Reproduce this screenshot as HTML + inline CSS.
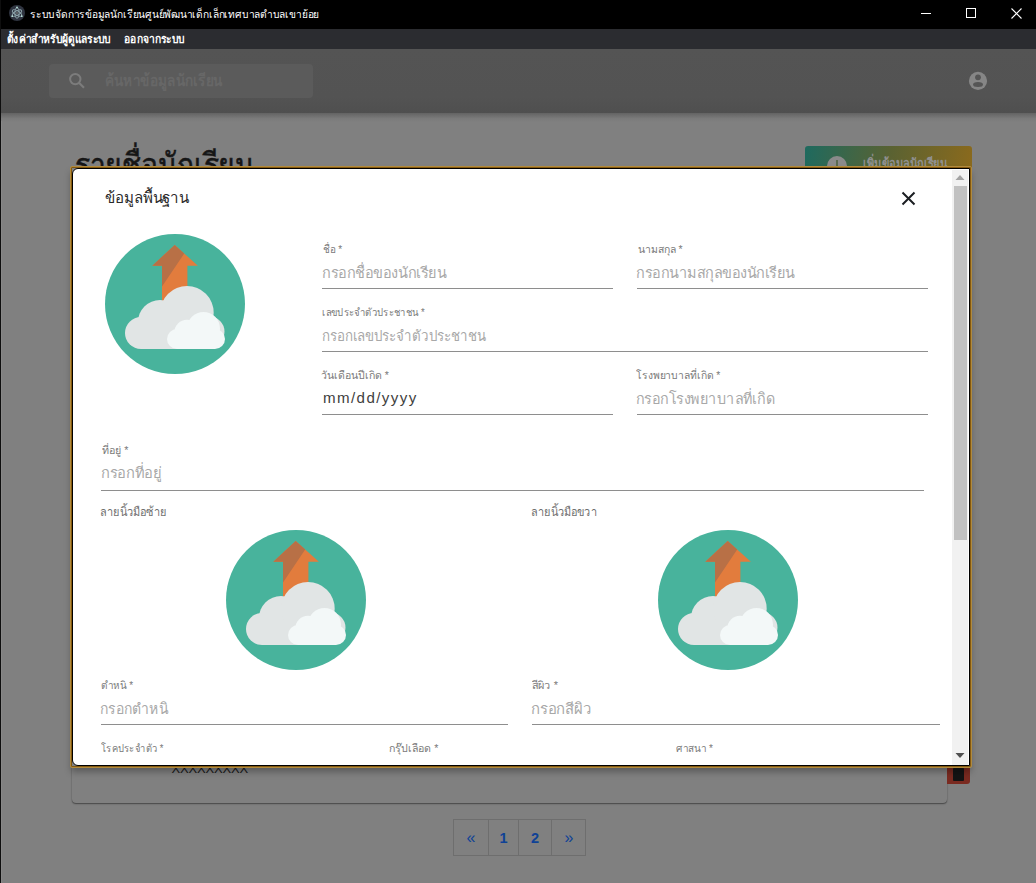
<!DOCTYPE html>
<html><head><meta charset="utf-8"><style>
html,body{margin:0;padding:0;}
body{width:1036px;height:883px;overflow:hidden;position:relative;background:#808080;font-family:"Liberation Sans",sans-serif;}
.a{position:absolute;}
.t{position:absolute;white-space:nowrap;transform-origin:0 0;}
#ptitle{-webkit-text-stroke:0.6px #161616;}
</style></head><body>
<!-- page behind overlay -->
<div class="a" style="left:0;top:0;width:1px;height:883px;background:#0e0e0e;z-index:50"></div><div class="a" style="left:1px;top:121px;width:1px;height:762px;background:#888;z-index:50"></div>
<div class="a" style="left:0;top:0;width:1036px;height:29px;background:#000"></div>
<div class="a" style="left:9px;top:5px;width:16px;height:16px;border-radius:50%;background:#2f3440"></div>
<svg class="a" style="left:9px;top:5px" width="16" height="16" viewBox="0 0 16 16"><g fill="none" stroke="#8fa6ad" stroke-width="0.9"><ellipse cx="8" cy="8" rx="5.2" ry="2.1" transform="rotate(30 8 8)"/><ellipse cx="8" cy="8" rx="5.2" ry="2.1" transform="rotate(90 8 8)"/><ellipse cx="8" cy="8" rx="5.2" ry="2.1" transform="rotate(150 8 8)"/></g><circle cx="8" cy="8" r="0.9" fill="#777"/><circle cx="8" cy="2.4" r="0.9" fill="#b8e0d8"/><circle cx="3.2" cy="11.2" r="0.9" fill="#b8e0d8"/><circle cx="12.8" cy="11.2" r="0.9" fill="#b8e0d8"/></svg>
<div class="a" style="left:0;top:29px;width:1036px;height:20px;background:#2b2c30"></div>
<div class="a" style="left:0;top:49px;width:1036px;height:64px;background:linear-gradient(#545454 0%,#535353 75%,#4f4f4f 100%)"></div>
<div class="a" style="left:0;top:113px;width:1036px;height:9px;background:linear-gradient(#636363,#7a7a7a 60%,#808080)"></div>
<div class="a" style="left:49px;top:64px;width:264px;height:34px;border-radius:4px;background:#5b5b5b"></div>
<svg class="a" style="left:65.5px;top:69.5px" width="20" height="20" viewBox="0 0 20 20"><circle cx="9.3" cy="9.1" r="5.2" fill="none" stroke="#7c7c7c" stroke-width="2"/><line x1="13" y1="12.8" x2="18" y2="17.8" stroke="#7c7c7c" stroke-width="2.2"/></svg>
<svg class="a" style="left:966px;top:69px" width="24" height="24" viewBox="0 0 24 24"><circle cx="12" cy="11.9" r="9.1" fill="#868686"/><circle cx="12" cy="8.3" r="2.9" fill="#555"/><ellipse cx="12" cy="15.6" rx="5" ry="2.5" fill="#555"/></svg>
<!-- window controls -->
<div class="a" style="left:921px;top:13px;width:10px;height:1px;background:#fff"></div>
<div class="a" style="left:966px;top:8px;width:8px;height:8px;border:1px solid #fff"></div>
<svg class="a" style="left:1011px;top:8px" width="11" height="11" viewBox="0 0 11 11"><path d="M0.5 0.5L10.5 10.5M10.5 0.5L0.5 10.5" stroke="#fff" stroke-width="1.1"/></svg>
<!-- button behind -->
<div class="a" style="left:805px;top:146px;width:167px;height:36px;border-radius:3px;background:linear-gradient(100deg,#1e6a5f 0%,#5a6232 50%,#8c6a1c 100%)"></div>
<div class="a" style="left:827px;top:156px;width:20px;height:20px;border-radius:50%;background:#8a8a8a"></div>
<div class="a" style="left:836px;top:160px;width:2px;height:12px;background:#5a6a50"></div>
<!-- card behind -->
<div class="a" style="left:72px;top:600px;width:875px;height:203px;border-radius:4px;background:#808080;box-shadow:0 1px 1.5px rgba(0,0,0,0.45), 0 0 1px rgba(0,0,0,0.25)"></div>
<div class="t" style="left:171.5px;top:761.7px;font-size:13px;line-height:13px;color:#1a1a1a;letter-spacing:-0.17px">XXXXXXXXX</div>
<div class="a" style="left:947px;top:766px;width:23px;height:18px;background:#7a2a20;border-radius:0 0 3px 0"></div>
<div class="a" style="left:953px;top:768px;width:11px;height:13px;background:#141414;border-radius:1px"></div>
<!-- pagination -->
<div class="a" style="left:453px;top:819px;width:133px;height:37px;border:1px solid #6e6e6e;box-sizing:border-box"></div>
<div class="a" style="left:488px;top:819px;width:1px;height:37px;background:#6e6e6e"></div>
<div class="a" style="left:518px;top:819px;width:1px;height:37px;background:#6e6e6e"></div>
<div class="a" style="left:551px;top:819px;width:1px;height:37px;background:#6e6e6e"></div>
<div class="t" style="left:461px;top:831.2px;font-size:14.5px;line-height:14.5px;color:#0f4296;width:20px;text-align:center;font-weight:normal;font-size:16px">&laquo;</div>
<div class="t" style="left:493.5px;top:831.2px;font-size:14.5px;line-height:14.5px;color:#0f4296;width:20px;text-align:center;font-weight:bold">1</div>
<div class="t" style="left:525px;top:831.2px;font-size:14.5px;line-height:14.5px;color:#0f4296;width:20px;text-align:center;font-weight:bold">2</div>
<div class="t" style="left:559px;top:831.2px;font-size:14.5px;line-height:14.5px;color:#0f4296;width:20px;text-align:center;font-weight:normal;font-size:16px">&raquo;</div>
<div id="title" class="t" style="left:29.7px;top:9.05px;font-size:10.53px;line-height:10.53px;color:#ffffff;font-weight:400;transform:scaleX(0.967)">ระบบจัดการข้อมูลนักเรียนศูนย์พัฒนาเด็กเล็กเทศบาลตำบลเขาย้อย</div>
<div id="menu1" class="t" style="left:7.3px;top:34.31px;font-size:11.40px;line-height:11.40px;color:#ffffff;font-weight:700;transform:scaleX(0.900)">ตั้งค่าสำหรับผู้ดูแลระบบ</div>
<div id="menu2" class="t" style="left:124.0px;top:34.31px;font-size:11.40px;line-height:11.40px;color:#ffffff;font-weight:700;transform:scaleX(0.898)">ออกจากระบบ</div>
<div id="search" class="t" style="left:105.2px;top:72.28px;font-size:16.14px;line-height:16.14px;color:#676767;font-weight:700;transform:scaleX(0.840)">ค้นหาข้อมูลนักเรียน</div>
<div id="ptitle" class="t" style="left:74.6px;top:149.01px;font-size:32.46px;line-height:32.46px;color:#161616;font-weight:400;transform:scaleX(0.869)">รายชื่อนักเรียน</div>
<div id="btn" class="t" style="left:862.6px;top:156.77px;font-size:14.74px;line-height:14.74px;color:#909090;font-weight:700;transform:scaleX(0.742)">เพิ่มข้อมูลนักเรียน</div>
<!-- modal -->
<div class="a" style="left:70px;top:166px;width:902px;height:602px;box-sizing:border-box;border:1px solid #b08a3e;border-radius:2px;box-shadow:inset 0 0 0 1px #85590e, 0 5px 7px -1px rgba(0,0,0,0.3)"></div>
<div class="a" style="left:72px;top:168px;width:898px;height:598px;box-sizing:border-box;border:1px solid #000;border-radius:6px 0 0 6px;background:#fff;overflow:hidden">
</div>
<!-- scrollbar -->
<div class="a" style="left:952px;top:170px;width:16px;height:595px;background:#f1f1f1"></div>
<div class="a" style="left:954px;top:186px;width:13px;height:354px;background:#c1c1c1"></div>
<svg class="a" style="left:954px;top:174px" width="12" height="8" viewBox="0 0 12 8"><polygon points="6,1 10.5,6 1.5,6" fill="#a3a3a3"/></svg>
<svg class="a" style="left:954px;top:751px" width="12" height="8" viewBox="0 0 12 8"><polygon points="1.5,2 10.5,2 6,7" fill="#505050"/></svg>
<!-- close X -->
<svg class="a" style="left:900px;top:190px" width="17" height="17" viewBox="0 0 17 17"><path d="M2.5 2.5L14.5 14.5M14.5 2.5L2.5 14.5" stroke="#1b1e22" stroke-width="2"/></svg>
<!-- images -->
<div class="a" style="left:105px;top:234px"><svg width="140" height="140" viewBox="0 0 140 140">
<circle cx="70" cy="70" r="70" fill="#48b39c"/>
<polygon points="69.7,11 47.3,31.7 57,31.7 57,70 82.4,70 82.4,31.7 92.9,31.7" fill="#e27c3d"/>
<polygon points="69.7,11 47.3,31.7 57,31.7 57,52.5 79.2,19.6" fill="#b87046"/>
<g fill="#e1e5e5">
<circle cx="36" cy="99" r="16"/>
<circle cx="55" cy="88" r="22"/>
<circle cx="82" cy="78.7" r="26.7"/>
<circle cx="104.5" cy="97.5" r="15"/>
<rect x="36" y="90" width="70" height="25"/>
</g>
<g fill="#f3f8f8">
<circle cx="72" cy="105" r="10"/>
<circle cx="82" cy="98.5" r="12.7"/>
<circle cx="98.5" cy="94.5" r="16.5"/>
<circle cx="110" cy="105" r="10"/>
<rect x="72" y="95" width="38" height="20"/>
</g>
</svg></div>
<div class="a" style="left:226px;top:530px"><svg width="140" height="140" viewBox="0 0 140 140">
<circle cx="70" cy="70" r="70" fill="#48b39c"/>
<polygon points="69.7,11 47.3,31.7 57,31.7 57,70 82.4,70 82.4,31.7 92.9,31.7" fill="#e27c3d"/>
<polygon points="69.7,11 47.3,31.7 57,31.7 57,52.5 79.2,19.6" fill="#b87046"/>
<g fill="#e1e5e5">
<circle cx="36" cy="99" r="16"/>
<circle cx="55" cy="88" r="22"/>
<circle cx="82" cy="78.7" r="26.7"/>
<circle cx="104.5" cy="97.5" r="15"/>
<rect x="36" y="90" width="70" height="25"/>
</g>
<g fill="#f3f8f8">
<circle cx="72" cy="105" r="10"/>
<circle cx="82" cy="98.5" r="12.7"/>
<circle cx="98.5" cy="94.5" r="16.5"/>
<circle cx="110" cy="105" r="10"/>
<rect x="72" y="95" width="38" height="20"/>
</g>
</svg></div>
<div class="a" style="left:658px;top:530px"><svg width="140" height="140" viewBox="0 0 140 140">
<circle cx="70" cy="70" r="70" fill="#48b39c"/>
<polygon points="69.7,11 47.3,31.7 57,31.7 57,70 82.4,70 82.4,31.7 92.9,31.7" fill="#e27c3d"/>
<polygon points="69.7,11 47.3,31.7 57,31.7 57,52.5 79.2,19.6" fill="#b87046"/>
<g fill="#e1e5e5">
<circle cx="36" cy="99" r="16"/>
<circle cx="55" cy="88" r="22"/>
<circle cx="82" cy="78.7" r="26.7"/>
<circle cx="104.5" cy="97.5" r="15"/>
<rect x="36" y="90" width="70" height="25"/>
</g>
<g fill="#f3f8f8">
<circle cx="72" cy="105" r="10"/>
<circle cx="82" cy="98.5" r="12.7"/>
<circle cx="98.5" cy="94.5" r="16.5"/>
<circle cx="110" cy="105" r="10"/>
<rect x="72" y="95" width="38" height="20"/>
</g>
</svg></div>
<!-- underlines -->
<div class="a" style="left:322px;top:288px;width:291px;height:1px;background:#8e8e8e"></div>
<div class="a" style="left:637px;top:288px;width:291px;height:1px;background:#8e8e8e"></div>
<div class="a" style="left:322px;top:351px;width:606px;height:1px;background:#8e8e8e"></div>
<div class="a" style="left:322px;top:414px;width:291px;height:1px;background:#8e8e8e"></div>
<div class="a" style="left:637px;top:414px;width:291px;height:1px;background:#8e8e8e"></div>
<div class="a" style="left:101px;top:490px;width:823px;height:1px;background:#8e8e8e"></div>
<div class="a" style="left:101px;top:724px;width:407px;height:1px;background:#8e8e8e"></div>
<div class="a" style="left:532px;top:724px;width:408px;height:1px;background:#8e8e8e"></div>
<div id="mmdd" class="t" style="left:323px;top:391.2px;font-size:14px;line-height:14px;color:#404040;letter-spacing:1.3px;transform:scaleX(1.08)">mm/dd/yyyy</div>
<div id="hdr" class="t" style="left:104.7px;top:189.73px;font-size:15.26px;line-height:15.26px;color:#2a2a2a;font-weight:400;transform:scaleX(0.990)">ข้อมูลพื้นฐาน</div>
<div id="l1" class="t" style="left:322.6px;top:243.85px;font-size:10.53px;line-height:10.53px;color:#7a7a7a;font-weight:400;transform:scaleX(0.950)">ชื่อ *</div>
<div id="p1" class="t" style="left:322.0px;top:264.93px;font-size:15.26px;line-height:15.26px;color:#a8a8a8;font-weight:400;transform:scaleX(0.950)">กรอกชื่อของนักเรียน</div>
<div id="l2" class="t" style="left:637.5px;top:243.85px;font-size:10.53px;line-height:10.53px;color:#7a7a7a;font-weight:400;transform:scaleX(0.992)">นามสกุล *</div>
<div id="p2" class="t" style="left:635.5px;top:264.93px;font-size:15.26px;line-height:15.26px;color:#a8a8a8;font-weight:400;transform:scaleX(0.946)">กรอกนามสกุลของนักเรียน</div>
<div id="l3" class="t" style="left:322.4px;top:307.05px;font-size:10.53px;line-height:10.53px;color:#7a7a7a;font-weight:400;transform:scaleX(0.901)">เลขประจำตัวประชาชน *</div>
<div id="p3" class="t" style="left:321.5px;top:327.73px;font-size:15.26px;line-height:15.26px;color:#a8a8a8;font-weight:400;transform:scaleX(0.873)">กรอกเลขประจำตัวประชาชน</div>
<div id="l4" class="t" style="left:321.0px;top:370.35px;font-size:10.53px;line-height:10.53px;color:#7a7a7a;font-weight:400;transform:scaleX(0.999)">วันเดือนปีเกิด *</div>
<div id="l5" class="t" style="left:636.2px;top:370.35px;font-size:10.53px;line-height:10.53px;color:#7a7a7a;font-weight:400;transform:scaleX(0.980)">โรงพยาบาลที่เกิด *</div>
<div id="p5" class="t" style="left:635.5px;top:391.03px;font-size:15.26px;line-height:15.26px;color:#a8a8a8;font-weight:400;transform:scaleX(0.939)">กรอกโรงพยาบาลที่เกิด</div>
<div id="l6" class="t" style="left:101.6px;top:444.55px;font-size:10.53px;line-height:10.53px;color:#7a7a7a;font-weight:400;transform:scaleX(1.019)">ที่อยู่ *</div>
<div id="p6" class="t" style="left:100.6px;top:464.93px;font-size:15.26px;line-height:15.26px;color:#a8a8a8;font-weight:400;transform:scaleX(0.962)">กรอกที่อยู่</div>
<div id="fpl" class="t" style="left:99.8px;top:506.36px;font-size:12.28px;line-height:12.28px;color:#707070;font-weight:400;transform:scaleX(0.894)">ลายนิ้วมือซ้าย</div>
<div id="fpr" class="t" style="left:531.0px;top:506.36px;font-size:12.28px;line-height:12.28px;color:#707070;font-weight:400;transform:scaleX(0.890)">ลายนิ้วมือขวา</div>
<div id="l7" class="t" style="left:101.3px;top:679.55px;font-size:10.53px;line-height:10.53px;color:#7a7a7a;font-weight:400;transform:scaleX(0.942)">ตำหนิ *</div>
<div id="p7" class="t" style="left:100.3px;top:700.53px;font-size:15.26px;line-height:15.26px;color:#a8a8a8;font-weight:400;transform:scaleX(0.915)">กรอกตำหนิ</div>
<div id="l8" class="t" style="left:531.9px;top:679.55px;font-size:10.53px;line-height:10.53px;color:#7a7a7a;font-weight:400;transform:scaleX(1.039)">สีผิว *</div>
<div id="p8" class="t" style="left:530.9px;top:700.53px;font-size:15.26px;line-height:15.26px;color:#a8a8a8;font-weight:400;transform:scaleX(0.979)">กรอกสีผิว</div>
<div id="l9" class="t" style="left:101.2px;top:742.55px;font-size:10.53px;line-height:10.53px;color:#7a7a7a;font-weight:400;transform:scaleX(0.890)">โรคประจำตัว *</div>
<div id="l10" class="t" style="left:388.5px;top:742.55px;font-size:10.53px;line-height:10.53px;color:#7a7a7a;font-weight:400;transform:scaleX(1.009)">กรุ๊ปเลือด *</div>
<div id="l11" class="t" style="left:676.0px;top:742.55px;font-size:10.53px;line-height:10.53px;color:#7a7a7a;font-weight:400;transform:scaleX(0.948)">ศาสนา *</div>
</body></html>
